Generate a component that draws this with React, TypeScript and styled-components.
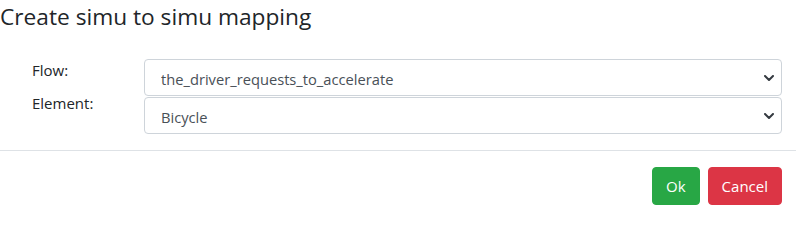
import React, { useState } from "react";
import styled, { createGlobalStyle } from "styled-components";

const GlobalStyle = createGlobalStyle`
  html, body {
    margin: 0;
    padding: 0;
    background: #fff;
  }
  body {
    font-family: "Open Sans", "Noto Sans", Arial, sans-serif;
    color: #212529;
  }
`;

const Modal = styled.div`
  width: 796px;
  height: 219px;
  background: #fff;
  display: flex;
  flex-direction: column;
`;

const Header = styled.div`
  padding: 3px 0 0 0;
  height: 55px;
  box-sizing: border-box;
`;

const Title = styled.h4`
  margin: 0;
  font-size: 22.7px;
  font-weight: 400;
  line-height: 27px;
  color: #212529;
`;

const Body = styled.div`
  display: grid;
  grid-template-columns: 112px 1fr;
  padding: 3px 14px 0 32px;
  height: 96px;
  box-sizing: border-box;
  border-bottom: 1px solid #dee2e6;
`;

const Labels = styled.div`
  display: flex;
  flex-direction: column;
`;

const Label = styled.label`
  display: block;
  font-size: 15px;
  line-height: 24px;
  margin-bottom: 9px;
  color: #212529;
`;

const Fields = styled.div`
  display: flex;
  flex-direction: column;
  gap: 1px;
  padding-top: 1px;
`;

const SelectWrap = styled.div`
  position: relative;
`;

const Select = styled.select`
  appearance: none;
  -webkit-appearance: none;
  width: 100%;
  height: 37px;
  box-sizing: border-box;
  padding: 3px 32px 0 16px;
  border: 1px solid #ced4da;
  border-radius: 4px;
  background: #fff;
  color: #495057;
  font-family: "Open Sans", "Noto Sans", Arial, sans-serif;
  font-size: 14.7px;
  outline: none;
`;

const Chevron = styled.svg`
  position: absolute;
  right: 8px;
  top: 50%;
  margin-top: -3px;
  width: 10px;
  height: 6px;
  pointer-events: none;
`;

const Footer = styled.div`
  display: flex;
  justify-content: flex-end;
  gap: 8px;
  padding: 16px 14px 0 0;
`;

const Button = styled.button<{ $variant: "ok" | "cancel" }>`
  height: 38px;
  padding: 0 13px;
  border: 1px solid ${(p) => (p.$variant === "ok" ? "#28a745" : "#dc3545")};
  border-radius: 4px;
  background: ${(p) => (p.$variant === "ok" ? "#28a745" : "#dc3545")};
  color: #fff;
  font-family: "Open Sans", "Noto Sans", Arial, sans-serif;
  font-size: 15px;
  line-height: 24px;
  cursor: pointer;
`;

const flows = ["the_driver_requests_to_accelerate"];
const elements = ["Bicycle"];

const Field = ({ value, options, onChange }) => (
  <SelectWrap>
    <Select value={value} onChange={(e) => onChange(e.target.value)}>
      {options.map((o) => (
        <option key={o} value={o}>
          {o}
        </option>
      ))}
    </Select>
    <Chevron viewBox="0 0 10 6">
      <path d="M1 1 L5 5 L9 1" fill="none" stroke="#343a40" strokeWidth="2" strokeLinecap="round" strokeLinejoin="round" />
    </Chevron>
  </SelectWrap>
);

const App = () => {
  const [flow, setFlow] = useState(flows[0]);
  const [element, setElement] = useState(elements[0]);

  return (
    <>
      <GlobalStyle />
      <Modal>
        <Header>
          <Title>Create simu to simu mapping</Title>
        </Header>
        <Body>
          <Labels>
            <Label>Flow:</Label>
            <Label>Element:</Label>
          </Labels>
          <Fields>
            <Field value={flow} options={flows} onChange={setFlow} />
            <Field value={element} options={elements} onChange={setElement} />
          </Fields>
        </Body>
        <Footer>
          <Button $variant="ok">Ok</Button>
          <Button $variant="cancel">Cancel</Button>
        </Footer>
      </Modal>
    </>
  );
};

export default App;
